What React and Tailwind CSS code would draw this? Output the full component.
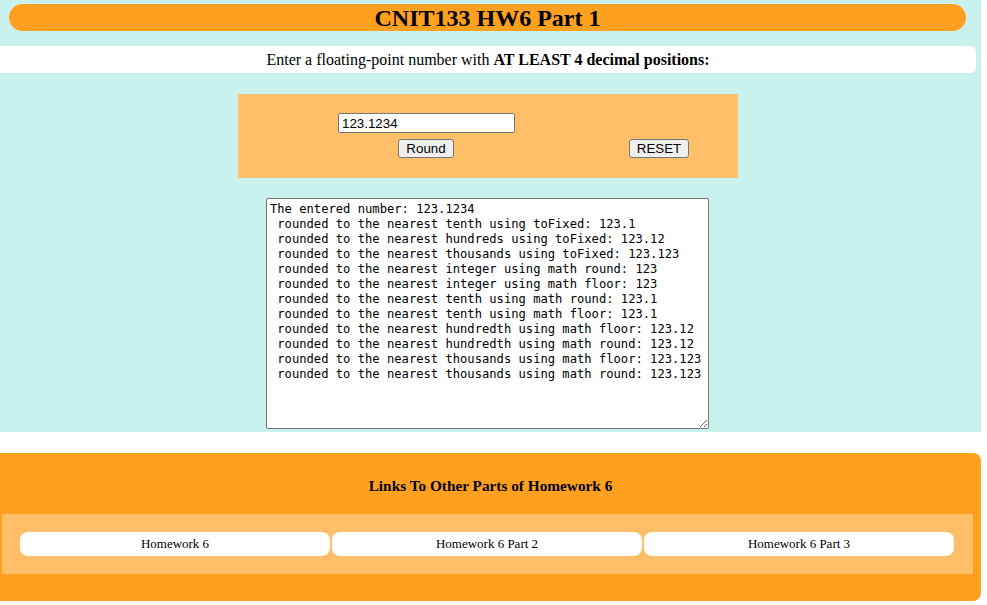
import { useState } from "react";

const lines = [
  "The entered number: 123.1234",
  " rounded to the nearest tenth using toFixed: 123.1",
  " rounded to the nearest hundreds using toFixed: 123.12",
  " rounded to the nearest thousands using toFixed: 123.123",
  " rounded to the nearest integer using math round: 123",
  " rounded to the nearest integer using math floor: 123",
  " rounded to the nearest tenth using math round: 123.1",
  " rounded to the nearest tenth using math floor: 123.1",
  " rounded to the nearest hundredth using math floor: 123.12",
  " rounded to the nearest hundredth using math round: 123.12",
  " rounded to the nearest thousands using math floor: 123.123",
  " rounded to the nearest thousands using math round: 123.123",
];

const App = () => {
  const [value, setValue] = useState("123.1234");
  const [output, setOutput] = useState(lines.join("\n"));

  return (
    <div className="w-[987px] min-h-[605px] bg-white font-['Liberation_Serif',serif] text-black">
      <div className="w-[981px]">
        {/* top part */}
        <div className="bg-[#c9f1ee] pt-[4px] pb-[3px]">
          <div className="ml-[9px] mr-[15px] h-[27px] rounded-full bg-[#ffa01f] flex items-center justify-center">
            <h1 className="text-[24px] font-bold leading-none">CNIT133 HW6 Part 1</h1>
          </div>

          <div className="mt-[15px] w-[976px] h-[27px] bg-white rounded-r-md flex items-center justify-center text-[16px]">
            <p>
              Enter a floating-point number with <b>AT LEAST 4 decimal positions:</b>
            </p>
          </div>

          {/* input box */}
          <div className="mt-[21px] ml-[238px] w-[500px] h-[84px] bg-[#ffbf69] pt-[19px] font-['Liberation_Sans',Arial,sans-serif] text-[13.33px]">
            <input
              value={value}
              onChange={(e) => setValue(e.target.value)}
              className="ml-[100px] block w-[177px] h-[20px] bg-white border border-[#767676] rounded-[2px] px-[3px] text-[13.33px] outline-none"
            />
            <div className="mt-[6px] flex">
              <button className="ml-[160px] w-[56px] h-[19px] bg-[#efefef] border border-[#767676] rounded-[3px] text-[13.33px] leading-none">
                Round
              </button>
              <button
                onClick={() => setOutput("")}
                className="ml-[175px] w-[60px] h-[19px] bg-[#efefef] border border-[#767676] rounded-[3px] text-[13.33px] leading-none">
                RESET
              </button>
            </div>
          </div>

          {/* results */}
          <textarea
            readOnly
            value={output}
            className="mt-[20px] ml-[266px] block w-[443px] h-[231px] bg-white border border-[#767676] rounded-[2px] px-[3px] py-[3px] font-['DejaVu_Sans_Mono',monospace] text-[12.15px] leading-[15px] whitespace-pre overflow-hidden resize"
          />
        </div>

        {/* footer */}
        <div className="mt-[21px] h-[148px] bg-[#ffa01f] rounded-r-lg pt-[24px]">
          <h3 className="text-center text-[15.3px] font-bold leading-[18px]">
            Links To Other Parts of Homework 6
          </h3>
          <div className="mt-[19px] ml-[2px] w-[971px] h-[60px] bg-[#ffbf69] pt-[18px] pl-[18px] flex gap-[2px]">
            {["Homework 6", "Homework 6 Part 2", "Homework 6 Part 3"].map((t) => (
              <a
                key={t}
                href="#"
                className="w-[310px] h-[24px] bg-white rounded-lg flex items-center justify-center text-[13px] text-black">
                {t}
              </a>
            ))}
          </div>
        </div>
      </div>
    </div>
  );
};

export default App;
